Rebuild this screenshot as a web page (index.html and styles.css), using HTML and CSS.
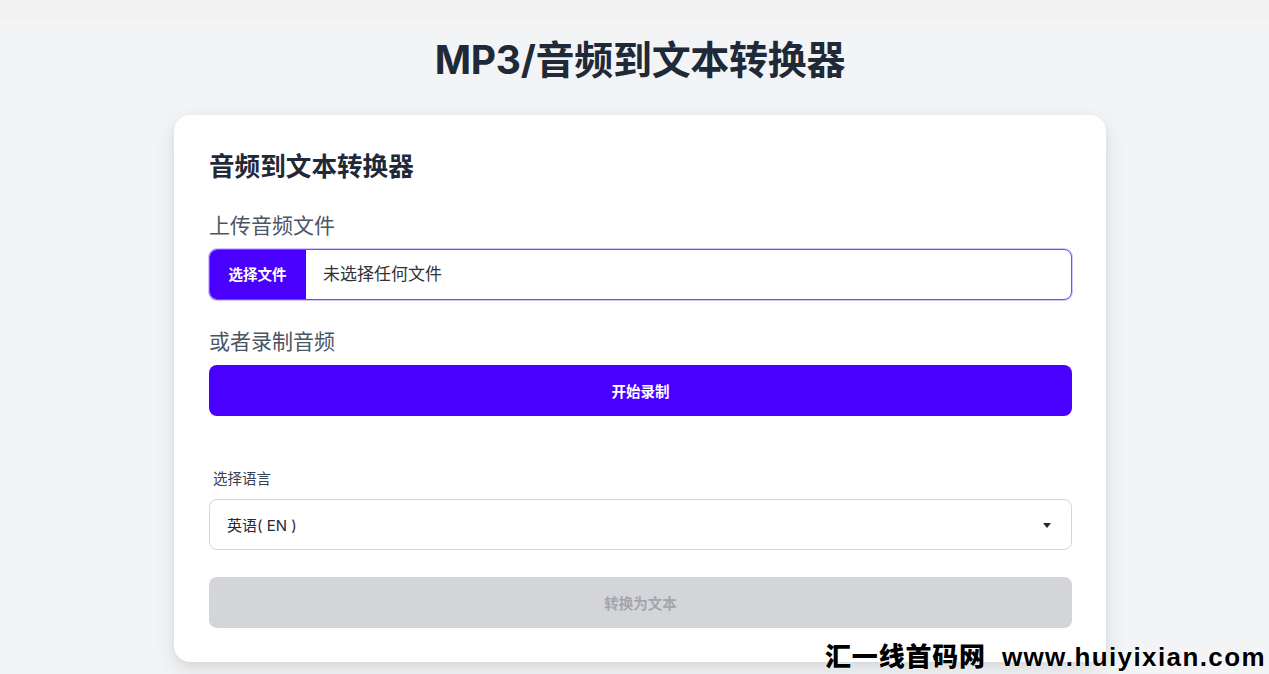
FILE: index.html
```html
<!DOCTYPE html>
<html lang="zh-CN">
<head>
<meta charset="utf-8">
<title>MP3/音频到文本转换器</title>
<link rel="stylesheet" href="styles.css">
</head>
<body>
<div class="topstrip"></div>
<main class="page">
  <h1 class="title">MP3/音频到文本转换器</h1>
  <section class="card">
    <h2 class="card-title">音频到文本转换器</h2>
    <div class="group">
      <div class="label-lg">上传音频文件</div>
      <div class="file-input">
        <span class="file-btn">选择文件</span>
        <span class="file-name">未选择任何文件</span>
      </div>
    </div>
    <div class="group">
      <div class="label-lg">或者录制音频</div>
      <button class="btn btn-primary" type="button">开始录制</button>
    </div>
    <div class="group group-lang">
      <div class="label-sm">选择语言</div>
      <div class="select">
        <span class="select-value">英语( EN )</span>
        <svg class="caret" width="8" height="5" viewBox="0 0 8 5"><path d="M0 0 H8 L4 5 Z" fill="#1f2937"/></svg>
      </div>
    </div>
    <button class="btn btn-disabled" type="button" disabled>转换为文本</button>
  </section>
</main>
<div class="watermark"><span class="wm-cn">汇一线首码网</span><span class="wm-url">www.huiyixian.com</span></div>
</body>
</html>
```

FILE: styles.css
```css
* { box-sizing: border-box; }
html, body { margin: 0; padding: 0; }
body {
  background: #f3f4f6;
  font-family: "Inter", "Noto Sans CJK SC", "Noto Sans", sans-serif;
  color: #1f2937;
  height: 674px;
  overflow: hidden;
  position: relative;
}
.topstrip {
  height: 19px;
  background: #f1f1f1;
}
.page {
  padding-left: 11px;
  display: flex;
  flex-direction: column;
  align-items: center;
}
.title {
  margin: 17px 0 31px;
  font-size: 39px;
  line-height: 48px;
  font-weight: 700;
  color: #1f2937;
  letter-spacing: -0.3px;
}
.card {
  width: 932px;
  background: #ffffff;
  border-radius: 16px;
  padding: 35px 34px 34px 35px;
  box-shadow: 0 8px 22px rgba(0, 0, 0, 0.10), 0 2px 6px rgba(0, 0, 0, 0.05);
  display: flex;
  flex-direction: column;
}
.card-title {
  margin: 0 0 27px;
  font-size: 25.6px;
  line-height: 34px;
  font-weight: 700;
  color: #1f2937;
}
.group {
  display: flex;
  flex-direction: column;
  gap: 8px;
  margin-bottom: 27px;
}
.group-lang {
  gap: 9px;
  margin-top: 25px;
}
.label-lg {
  font-size: 21px;
  line-height: 30px;
  color: #4b5563;
  font-weight: 400;
}
.label-sm {
  font-size: 14.5px;
  line-height: 22px;
  color: #374151;
  padding-left: 4px;
}
.file-input {
  height: 51px;
  display: flex;
  align-items: stretch;
  border: 1px solid #6f4cff;
  box-shadow: 0 0 0 1px rgba(124, 92, 255, 0.35);
  border-radius: 8px;
  overflow: hidden;
  background: #fff;
}
.file-btn {
  width: 97px;
  background: #4a00ff;
  color: #ffffff;
  font-weight: 700;
  font-size: 14.5px;
  display: flex;
  align-items: center;
  justify-content: center;
  padding-bottom: 3px;
  margin: -1px 0 -1px -1px;
}
.file-name {
  display: flex;
  align-items: center;
  padding-left: 17px;
  padding-bottom: 4px;
  font-size: 17px;
  color: #333333;
}
.btn {
  height: 51px;
  width: 100%;
  border: none;
  border-radius: 8px;
  font-family: inherit;
  font-size: 14.5px;
  font-weight: 700;
  display: flex;
  align-items: center;
  justify-content: center;
  padding: 0 0 1px;
}
.btn-primary {
  background: #4a00ff;
  color: #ffffff;
}
.btn-disabled {
  background: #d4d5d9;
  color: #a3a5aa;
}
.select {
  height: 51px;
  border: 1px solid #d4d5d9;
  border-radius: 8px;
  display: flex;
  align-items: center;
  justify-content: space-between;
  padding: 0 20px 0 17px;
  background: #fff;
}
.select-value {
  font-size: 15px;
  color: #1f2937;
}
.caret { display: block; margin-top: 2px; }
.watermark {
  position: absolute;
  right: 3px;
  bottom: 2px;
  display: flex;
  align-items: baseline;
  gap: 16px;
  color: #000000;
  font-weight: 900;
  font-size: 26px;
  line-height: 30px;
  text-shadow: 0 0 2px #ffffff, 0 0 2px #ffffff;
}
.wm-cn { font-family: "Noto Sans CJK SC", sans-serif; font-weight: 900; letter-spacing: 0.8px; }
.wm-url { font-family: "Liberation Sans", "DejaVu Sans", sans-serif; font-weight: 700; letter-spacing: 1.4px; }
```
